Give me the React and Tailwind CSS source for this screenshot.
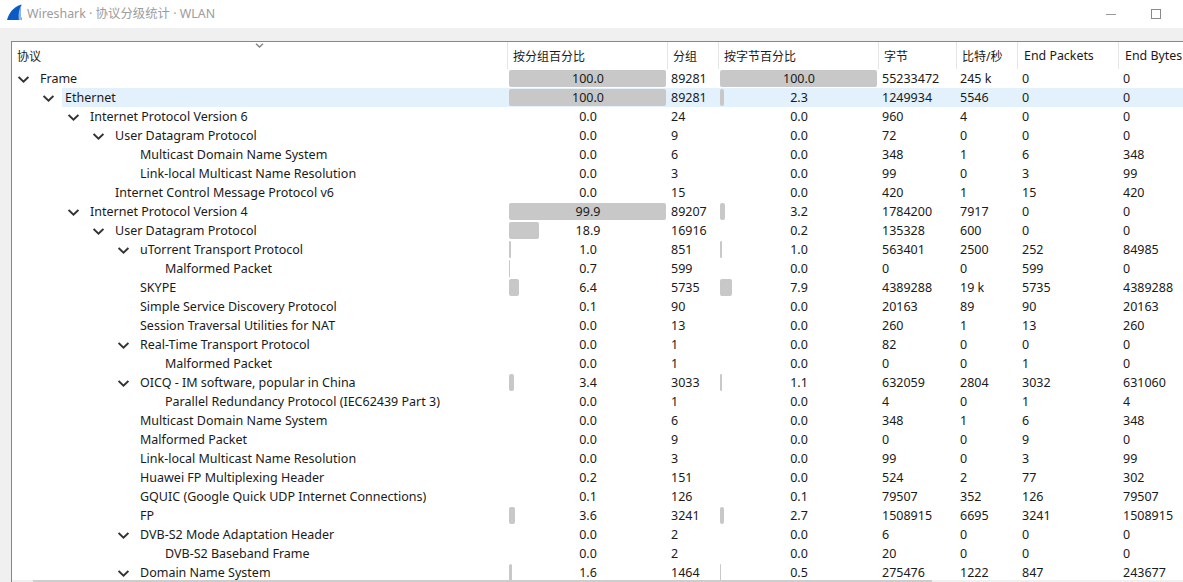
import React from 'react';

// name, depth, expandable, pkt %, packets, byte %, bytes, bits/s, end packets, end bytes
const ROWS = [
  ['Frame', 0, true, '100.0', '89281', '100.0', '55233472', '245 k', '0', '0'],
  ['Ethernet', 1, true, '100.0', '89281', '2.3', '1249934', '5546', '0', '0'],
  ['Internet Protocol Version 6', 2, true, '0.0', '24', '0.0', '960', '4', '0', '0'],
  ['User Datagram Protocol', 3, true, '0.0', '9', '0.0', '72', '0', '0', '0'],
  ['Multicast Domain Name System', 4, false, '0.0', '6', '0.0', '348', '1', '6', '348'],
  ['Link-local Multicast Name Resolution', 4, false, '0.0', '3', '0.0', '99', '0', '3', '99'],
  ['Internet Control Message Protocol v6', 3, false, '0.0', '15', '0.0', '420', '1', '15', '420'],
  ['Internet Protocol Version 4', 2, true, '99.9', '89207', '3.2', '1784200', '7917', '0', '0'],
  ['User Datagram Protocol', 3, true, '18.9', '16916', '0.2', '135328', '600', '0', '0'],
  ['uTorrent Transport Protocol', 4, true, '1.0', '851', '1.0', '563401', '2500', '252', '84985'],
  ['Malformed Packet', 5, false, '0.7', '599', '0.0', '0', '0', '599', '0'],
  ['SKYPE', 4, false, '6.4', '5735', '7.9', '4389288', '19 k', '5735', '4389288'],
  ['Simple Service Discovery Protocol', 4, false, '0.1', '90', '0.0', '20163', '89', '90', '20163'],
  ['Session Traversal Utilities for NAT', 4, false, '0.0', '13', '0.0', '260', '1', '13', '260'],
  ['Real-Time Transport Protocol', 4, true, '0.0', '1', '0.0', '82', '0', '0', '0'],
  ['Malformed Packet', 5, false, '0.0', '1', '0.0', '0', '0', '1', '0'],
  ['OICQ - IM software, popular in China', 4, true, '3.4', '3033', '1.1', '632059', '2804', '3032', '631060'],
  ['Parallel Redundancy Protocol (IEC62439 Part 3)', 5, false, '0.0', '1', '0.0', '4', '0', '1', '4'],
  ['Multicast Domain Name System', 4, false, '0.0', '6', '0.0', '348', '1', '6', '348'],
  ['Malformed Packet', 4, false, '0.0', '9', '0.0', '0', '0', '9', '0'],
  ['Link-local Multicast Name Resolution', 4, false, '0.0', '3', '0.0', '99', '0', '3', '99'],
  ['Huawei FP Multiplexing Header', 4, false, '0.2', '151', '0.0', '524', '2', '77', '302'],
  ['GQUIC (Google Quick UDP Internet Connections)', 4, false, '0.1', '126', '0.1', '79507', '352', '126', '79507'],
  ['FP', 4, false, '3.6', '3241', '2.7', '1508915', '6695', '3241', '1508915'],
  ['DVB-S2 Mode Adaptation Header', 4, true, '0.0', '2', '0.0', '6', '0', '0', '0'],
  ['DVB-S2 Baseband Frame', 5, false, '0.0', '2', '0.0', '20', '0', '0', '0'],
  ['Domain Name System', 4, true, '1.6', '1464', '0.5', '275476', '1222', '847', '243677'],
];

function Chevron({ className }) {
  return (
    <svg className={className} width="11" height="7" viewBox="0 0 11 7" fill="none">
      <path d="M0.6 0.9 L5.5 5.6 L10.4 0.9" stroke="#333333" strokeWidth="1.9" />
    </svg>
  );
}

// Percentage cell with the grey bar behind the number
function PctCell({ value }) {
  const w = Math.round(parseFloat(value) * 1.57);
  return (
    <div className="relative w-[160px] h-full pt-[2px] shrink-0 flex items-center justify-center">
      {w > 0 && (
        <div
          className="absolute left-[1px] top-[1px] bottom-[1px] bg-[#c8c8c8] rounded-[2px]"
          style={{ width: w }}
        />
      )}
      <span className="relative">{value}</span>
    </div>
  );
}

function HeadCell({ className, children }) {
  return (
    <div className={`h-full shrink-0 flex items-center pl-[5px] pt-[2px] border-r border-[#e5e5e5] ${className}`}>
      {children}
    </div>
  );
}

function Num({ className, children }) {
  return <div className={`h-full shrink-0 flex items-center pt-[2px] pl-[3px] ${className}`}>{children}</div>;
}

function Row({ row, selected }) {
  const [name, depth, open, pktPct, pkts, bytePct, bytes, bits, endPkts, endBytes] = row;
  const sel = selected ? 'bg-[#e3f1fc]' : '';
  return (
    <div className="flex h-[19px] items-center whitespace-nowrap">
      <div className="w-[496px] h-full shrink-0 flex items-center" style={{ paddingLeft: depth * 25 }}>
        <div className="w-[25px] pt-[1px] shrink-0 flex justify-center pr-[3px]">{open && <Chevron />}</div>
        <div className={`h-full flex-1 flex items-center pt-[2px] pl-[3px] ${sel}`}>{name}</div>
      </div>
      <div className={`flex items-center h-full flex-1 ${sel}`}>
        <PctCell value={pktPct} />
        <Num className="w-[51px]">{pkts}</Num>
        <PctCell value={bytePct} />
        <Num className="w-[78px]">{bytes}</Num>
        <Num className="w-[61px]">{bits}</Num>
        <Num className="w-[101px] pl-[4px]">{endPkts}</Num>
        <Num className="pl-[4px]">{endBytes}</Num>
      </div>
    </div>
  );
}

export default function App() {
  return (
    <div className="relative h-[582px] w-[1183px] overflow-hidden bg-[#f0f0f0] flex flex-col text-[12.5px] text-[#1a1a1a] font-['Noto_Sans','Noto_Sans_CJK_SC',sans-serif]">
      {/* Title bar */}
      <div className="h-[28px] shrink-0 bg-white flex items-center pl-[6px]">
        <svg className="-mt-[3px]" width="17" height="17" viewBox="0 0 17 17">
          <path d="M1 16 C3 9 7 3 15.5 0.5 C14 6 14 11 16 16 Z" fill="#0a5bc4" />
          <path d="M12.8 16 C12 10 13 5 15.5 0.5 C14.2 6 14.2 11 16 16 Z" fill="#8fb8e4" />
        </svg>
        <span className="ml-[4px] text-[12.4px] text-[#9c9c9c]">Wireshark · 协议分级统计 · WLAN</span>
        <div className="ml-auto flex items-center">
          <div className="w-[10px] h-px bg-[#9a9a9a]" />
          <div className="ml-[35px] mr-[22px] w-[10px] h-[10px] border border-[#8a8a8a]" />
        </div>
      </div>
      <div className="h-[13px] shrink-0" />
      {/* Tree table */}
      <div className="relative flex-1 ml-[11px] bg-white border-t-[1px] border-l-[1px] border-[#85878c] overflow-hidden">
        <div className="flex h-[27px] items-center whitespace-nowrap">
          <HeadCell className="w-[496px] relative text-[12px]">
            协议
            <Chevron className="absolute left-[243px] top-[1px] w-[9px] h-[5px] opacity-60" />
          </HeadCell>
          <HeadCell className="w-[160px] text-[12px]">按分组百分比</HeadCell>
          <HeadCell className="w-[51px] text-[12px]">分组</HeadCell>
          <HeadCell className="w-[160px] text-[12px]">按字节百分比</HeadCell>
          <HeadCell className="w-[78px] text-[12px]">字节</HeadCell>
          <HeadCell className="w-[61px] text-[12px]">比特/秒</HeadCell>
          <HeadCell className="w-[101px] pl-[6px] text-[12.4px]">End Packets</HeadCell>
          <div className="pl-[6px] pt-[2px] text-[12.4px]">End Bytes</div>
        </div>
        {ROWS.map((row, i) => (
          <Row key={i} row={row} selected={i === 1} />
        ))}
      </div>
      {/* Horizontal scrollbar sits over the last row */}
      <div className="absolute left-[12px] right-0 bottom-0 h-[2px] bg-[#f0f0f0] flex">
        <div className="ml-[21px] w-[899px] bg-[#cdcdcd]" />
      </div>
    </div>
  );
}
